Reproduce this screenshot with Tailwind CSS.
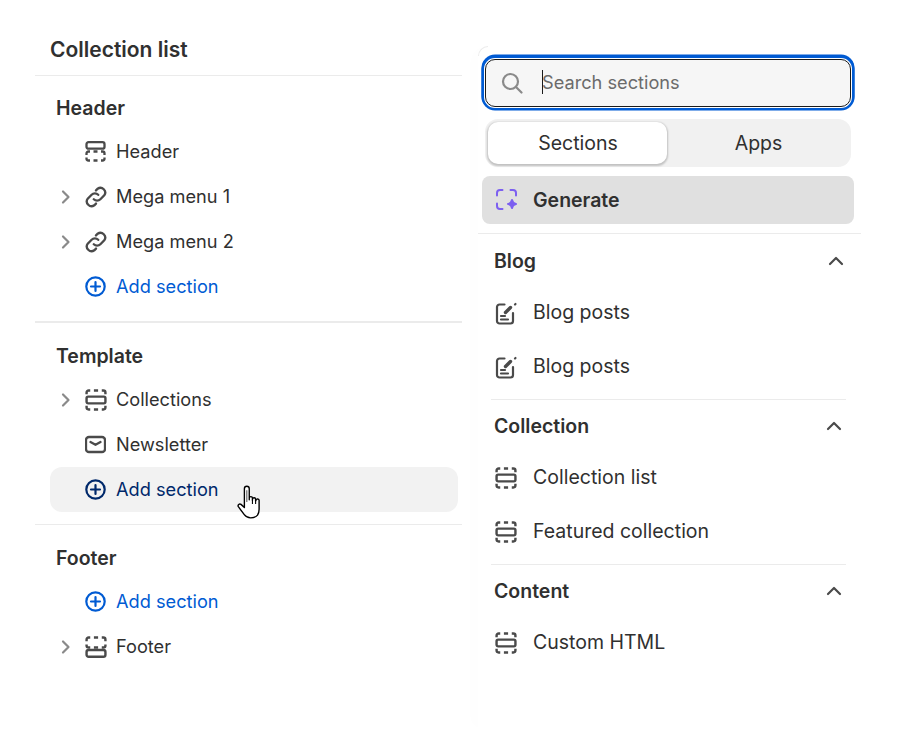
<!DOCTYPE html>
<html lang="en">
<head>
<meta charset="UTF-8">
<title>Collection list</title>
<script src="https://cdn.jsdelivr.net/npm/@tailwindcss/browser@4"></script>
</head>
<body class="bg-white font-['Inter',sans-serif] text-[#303030] overflow-hidden">
<div class="flex h-[729px] w-[922px] overflow-hidden">

  <!-- Left: section tree -->
  <div class="w-[427px] ml-[35px] shrink-0">
    <div class="h-[76px] pt-[36px] pl-[15px] border-b border-[#ebebeb] text-[21px] leading-[27px] font-semibold">Collection list</div>

    <div class="h-[247px] border-b-2 border-[#ebebeb] pt-[19px]">
      <div class="pl-[21px] h-[26px] leading-[26px] text-[19.5px] font-semibold">Header</div>
      <div class="flex items-center h-[45px] pl-[50px] gap-[10px] text-[18.2px] mt-[8px]">
        <svg class="w-[21px] h-[21px]" viewBox="0 0 21 21" fill="none" stroke="#4a4a4a" stroke-width="2.300"><rect x="1.500" y="1.200" width="18" height="6.500" rx="2"/><path d="M1.500 14v-1.500a2 2 0 0 1 2-2H5M8.500 10.500h4M16 10.500h1.500a2 2 0 0 1 2 2V14M1.500 16.500v1a2 2 0 0 0 2 2H5M8.500 19.500h4M16 19.500h1.500a2 2 0 0 0 2-2v-1"/></svg>
        <span>Header</span>
      </div>
      <div class="flex items-center h-[45px] pl-[24px] text-[18.2px]">
        <svg class="w-[14px] h-[16px] mr-[12px]" viewBox="0 0 14 16" fill="none" stroke="#8a8a8a" stroke-width="2.200" stroke-linecap="round" stroke-linejoin="round"><path d="M4 2.500 9.500 8 4 13.500"/></svg>
        <svg class="w-[22px] h-[22px] mr-[9px]" viewBox="1 1 20 20" fill="none" stroke="#4a4a4a" stroke-width="2.100" stroke-linecap="round"><path d="M9 13a4.200 4.200 0 0 0 6 0l3.500-3.500a4.300 4.300 0 0 0-6-6L11 5"/><path d="M13 9a4.200 4.200 0 0 0-6 0l-3.500 3.500a4.300 4.300 0 0 0 6 6L11 17"/></svg>
        <span>Mega menu 1</span>
      </div>
      <div class="flex items-center h-[45px] pl-[24px] text-[18.2px]">
        <svg class="w-[14px] h-[16px] mr-[12px]" viewBox="0 0 14 16" fill="none" stroke="#8a8a8a" stroke-width="2.200" stroke-linecap="round" stroke-linejoin="round"><path d="M4 2.500 9.500 8 4 13.500"/></svg>
        <svg class="w-[22px] h-[22px] mr-[9px]" viewBox="1 1 20 20" fill="none" stroke="#4a4a4a" stroke-width="2.100" stroke-linecap="round"><path d="M9 13a4.200 4.200 0 0 0 6 0l3.500-3.500a4.300 4.300 0 0 0-6-6L11 5"/><path d="M13 9a4.200 4.200 0 0 0-6 0l-3.500 3.500a4.300 4.300 0 0 0 6 6L11 17"/></svg>
        <span>Mega menu 2</span>
      </div>
      <div class="flex items-center h-[45px] pl-[50px] gap-[10px] text-[18.2px] text-[#005bd3]">
        <svg class="w-[21px] h-[21px]" viewBox="0 0 21 21" fill="none" stroke="#005bd3" stroke-width="2.200" stroke-linecap="round"><circle cx="10.500" cy="10.500" r="9.200"/><path d="M10.500 6v9M6 10.500h9"/></svg>
        <span>Add section</span>
      </div>
    </div>

    <div class="h-[202px] border-b border-[#ebebeb] pt-[20px]">
      <div class="pl-[21px] h-[26px] leading-[26px] text-[19.5px] font-semibold">Template</div>
      <div class="flex items-center h-[45px] pl-[24px] text-[18.2px] mt-[8px]">
        <svg class="w-[14px] h-[16px] mr-[12px]" viewBox="0 0 14 16" fill="none" stroke="#8a8a8a" stroke-width="2.200" stroke-linecap="round" stroke-linejoin="round"><path d="M4 2.500 9.500 8 4 13.500"/></svg>
        <svg class="w-[22px] h-[22px] mr-[9px]" viewBox="0 0 21 21" fill="none" stroke="#4a4a4a" stroke-width="2.300"><rect x="1.500" y="7.300" width="18" height="6.400" rx="1.500"/><path d="M1.500 5V3.500a2 2 0 0 1 2-2H5M8.500 1.500h4M16 1.500h1.500a2 2 0 0 1 2 2V5M1.500 16v1.500a2 2 0 0 0 2 2H5M8.500 19.500h4M16 19.500h1.500a2 2 0 0 0 2-2V16"/></svg>
        <span>Collections</span>
      </div>
      <div class="flex items-center h-[45px] pl-[50px] gap-[10px] text-[18.2px]">
        <svg class="w-[21px] h-[21px]" viewBox="0 0 21 21" fill="none" stroke="#4a4a4a" stroke-width="2.300" stroke-linecap="round" stroke-linejoin="round"><rect x="1" y="3" width="19" height="15" rx="3"/><path d="M5.500 8l5 2.800 5-2.800"/></svg>
        <span>Newsletter</span>
      </div>
      <div class="relative flex items-center h-[45px] ml-[15px] mr-[4px] pl-[35px] gap-[10px] text-[18.2px] text-[#00296b] bg-[#f2f2f2] rounded-[12px]">
        <svg class="w-[21px] h-[21px]" viewBox="0 0 21 21" fill="none" stroke="#00296b" stroke-width="2.200" stroke-linecap="round"><circle cx="10.500" cy="10.500" r="9.200"/><path d="M10.500 6v9M6 10.500h9"/></svg>
        <span>Add section</span>
        <!-- pointer cursor -->
        <svg class="absolute left-[186px] top-[18px] w-[28px] h-[36px]" viewBox="0 0 26 34" fill="#fff" stroke="#000" stroke-width="1.300" stroke-linejoin="round"><path d="M7.700 3.500a2.300 2.300 0 0 1 4.600 0v10.500l0-1.500a1.500 1.500 0 0 1 3 0v2l0-1a1.500 1.500 0 0 1 3 0v1.500l.3-.5a1.500 1.500 0 0 1 3 .5v8c0 2.500-.5 4-1.500 5.500-1.500 1.800-3.500 2.500-6.500 2.500-3 0-4.500-1-6-3L2 20.500a1.700 1.700 0 0 1 2.500-2.200l3.200 3z"/><path d="M10 5v11" stroke-width="1" stroke="#555"/><path d="M15.300 14v4M18.300 14.500v3.500" stroke-width="1"/></svg>
      </div>
    </div>

    <div class="pt-[20px]">
      <div class="pl-[21px] h-[26px] leading-[26px] text-[19.5px] font-semibold">Footer</div>
      <div class="flex items-center h-[45px] pl-[50px] gap-[10px] text-[18.2px] text-[#005bd3] mt-[8px]">
        <svg class="w-[21px] h-[21px]" viewBox="0 0 21 21" fill="none" stroke="#005bd3" stroke-width="2.200" stroke-linecap="round"><circle cx="10.500" cy="10.500" r="9.200"/><path d="M10.500 6v9M6 10.500h9"/></svg>
        <span>Add section</span>
      </div>
      <div class="flex items-center h-[45px] pl-[24px] text-[18.2px]">
        <svg class="w-[14px] h-[16px] mr-[12px]" viewBox="0 0 14 16" fill="none" stroke="#8a8a8a" stroke-width="2.200" stroke-linecap="round" stroke-linejoin="round"><path d="M4 2.500 9.500 8 4 13.500"/></svg>
        <svg class="w-[22px] h-[22px] mr-[9px]" viewBox="0 0 21 21" fill="none" stroke="#4a4a4a" stroke-width="2.300"><rect x="1.500" y="13.300" width="18" height="6.500" rx="2"/><path d="M1.500 8v1a2 2 0 0 0 2 2H5M8.500 11h4M16 11h1.500a2 2 0 0 0 2-2V8M1.500 5V3.500a2 2 0 0 1 2-2H5M8.500 1.500h4M16 1.500h1.500a2 2 0 0 1 2 2V5"/></svg>
        <span>Footer</span>
      </div>
    </div>
  </div>

  <!-- Right: add section picker -->
  <div class="relative w-[383px] ml-[16px] mt-[46px] shrink-0 rounded-tl-[12px] shadow-[-8px_0_16px_rgba(0,0,0,0.008)]">
    <div class="absolute left-0 top-0 w-[10px] h-[10px] rounded-tl-[10px] border-t border-l border-[#ececec]"></div>

    <div class="ml-[7px] mt-[13px] w-[366px] h-[48px] flex items-center rounded-[10px] bg-[#f6f6f6] border border-[#1a1a1a] shadow-[0_0_0_1px_#fff,0_0_0_3.5px_#005bd3,0_-1px_0_3.5px_#005bd3] pl-[15px]">
      <svg class="w-[22px] h-[22px] mr-[19px]" viewBox="0 0 22 22" fill="none" stroke="#8a8a8a" stroke-width="2.200" stroke-linecap="round"><circle cx="9.500" cy="9.500" r="7.500"/><path d="M15 15l5.500 5.500"/></svg>
      <span class="relative -mt-[2px] text-[18.2px] text-[#6b6b6b] leading-[24px]"><span class="absolute left-0 top-0 w-px h-[24px] bg-[#1a1a1a]"></span>Search sections</span>
    </div>

    <div class="ml-[7px] mt-[12px] w-[366px] h-[48px] bg-[#f1f1f1] rounded-[13px] flex p-[3px] text-[19.5px]">
      <div class="w-[179px] bg-white rounded-[10px] shadow-[0_1px_2px_1px_rgba(0,0,0,0.2)] flex items-center justify-center pt-[2px] pl-[1px]">Sections</div>
      <div class="flex-1 flex items-center justify-center pt-[2px] pl-[2px]">Apps</div>
    </div>

    <div class="ml-[4px] mt-[9px] w-[372px] h-[48px] bg-[#e0e0e0] rounded-[8px] flex items-center pl-[14px] gap-[15px] text-[19.5px] font-semibold">
      <svg class="w-[22px] h-[22px]" viewBox="0 0 22 22" fill="none" stroke="#7c5ff0" stroke-width="2" stroke-linecap="round"><path d="M1 6.500V4a3 3 0 0 1 3-3h2.500M14.500 1H17a3 3 0 0 1 3 3v2.500M1 14.500V17a3 3 0 0 0 3 3h2.500"/><path d="M16 11c.4 2.600 1.400 3.600 4 4-2.600.4-3.600 1.400-4 4-.4-2.600-1.400-3.600-4-4 2.600-.4 3.600-1.400 4-4z" fill="#7c5ff0" stroke-linejoin="round"/></svg>
      <span class="pt-[2px]">Generate</span>
    </div>

    <div class="mt-[9px] border-t border-[#ebebeb]">
      <div class="flex items-center justify-between h-[54px] pl-[16px] pr-[17px] text-[19.5px] font-semibold">
        <span class="pt-[2px]">Blog</span>
        <svg class="w-[16px] h-[10px]" viewBox="0 0 16 10" fill="none" stroke="#4a4a4a" stroke-width="2.200" stroke-linecap="round" stroke-linejoin="round"><path d="M2 8l6-6 6 6"/></svg>
      </div>
      <div class="flex items-center h-[54px] pl-[17px] gap-[15px] text-[19.5px] -mt-[2px]">
        <svg class="w-[23px] h-[23px]" viewBox="0 0 23 23" fill="none" stroke="#4a4a4a" stroke-width="2.200" stroke-linecap="round"><path d="M9.500 2.500H4.500A2.500 2.500 0 0 0 2 5v14a2.500 2.500 0 0 0 2.500 2.500h11a2.500 2.500 0 0 0 2.500-2.500v-8"/><path d="M10.500 10.500l5-5" stroke-width="3.400"/><path d="M20 2.500l.5-.5"/><path d="M6 14h4M6 17.500h7"/></svg>
        <span>Blog posts</span>
      </div>
      <div class="flex items-center h-[54px] pl-[17px] gap-[15px] text-[19.5px]">
        <svg class="w-[23px] h-[23px]" viewBox="0 0 23 23" fill="none" stroke="#4a4a4a" stroke-width="2.200" stroke-linecap="round"><path d="M9.500 2.500H4.500A2.500 2.500 0 0 0 2 5v14a2.500 2.500 0 0 0 2.500 2.500h11a2.500 2.500 0 0 0 2.500-2.500v-8"/><path d="M10.500 10.500l5-5" stroke-width="3.400"/><path d="M20 2.500l.5-.5"/><path d="M6 14h4M6 17.500h7"/></svg>
        <span>Blog posts</span>
      </div>
    </div>

    <div class="ml-[13px] mr-[15px] mt-[5px] border-t border-[#ebebeb]">
      <div class="flex items-center justify-between h-[52px] pl-[3px] pr-[4px] text-[19.5px] font-semibold">
        <span class="pt-[2px]">Collection</span>
        <svg class="w-[16px] h-[10px]" viewBox="0 0 16 10" fill="none" stroke="#4a4a4a" stroke-width="2.200" stroke-linecap="round" stroke-linejoin="round"><path d="M2 8l6-6 6 6"/></svg>
      </div>
      <div class="flex items-center h-[54px] pl-[4px] gap-[16px] text-[19.5px] -mt-[1px]">
        <svg class="w-[22px] h-[22px]" viewBox="0 0 21 21" fill="none" stroke="#4a4a4a" stroke-width="2.300"><rect x="1.500" y="7.300" width="18" height="6.400" rx="1.500"/><path d="M1.500 5V3.500a2 2 0 0 1 2-2H5M8.500 1.500h4M16 1.500h1.500a2 2 0 0 1 2 2V5M1.500 16v1.500a2 2 0 0 0 2 2H5M8.500 19.500h4M16 19.500h1.500a2 2 0 0 0 2-2V16"/></svg>
        <span>Collection list</span>
      </div>
      <div class="flex items-center h-[54px] pl-[4px] gap-[16px] text-[19.5px]">
        <svg class="w-[22px] h-[22px]" viewBox="0 0 21 21" fill="none" stroke="#4a4a4a" stroke-width="2.300"><rect x="1.500" y="7.300" width="18" height="6.400" rx="1.500"/><path d="M1.500 5V3.500a2 2 0 0 1 2-2H5M8.500 1.500h4M16 1.500h1.500a2 2 0 0 1 2 2V5M1.500 16v1.500a2 2 0 0 0 2 2H5M8.500 19.500h4M16 19.500h1.500a2 2 0 0 0 2-2V16"/></svg>
        <span>Featured collection</span>
      </div>
    </div>

    <div class="ml-[13px] mr-[15px] mt-[5px] border-t border-[#ebebeb]">
      <div class="flex items-center justify-between h-[52px] pl-[3px] pr-[4px] text-[19.5px] font-semibold">
        <span class="pt-[2px]">Content</span>
        <svg class="w-[16px] h-[10px]" viewBox="0 0 16 10" fill="none" stroke="#4a4a4a" stroke-width="2.200" stroke-linecap="round" stroke-linejoin="round"><path d="M2 8l6-6 6 6"/></svg>
      </div>
      <div class="flex items-center h-[54px] pl-[4px] gap-[16px] text-[19.5px] -mt-[1px]">
        <svg class="w-[22px] h-[22px]" viewBox="0 0 21 21" fill="none" stroke="#4a4a4a" stroke-width="2.300"><rect x="1.500" y="7.300" width="18" height="6.400" rx="1.500"/><path d="M1.500 5V3.500a2 2 0 0 1 2-2H5M8.500 1.500h4M16 1.500h1.500a2 2 0 0 1 2 2V5M1.500 16v1.500a2 2 0 0 0 2 2H5M8.500 19.500h4M16 19.500h1.500a2 2 0 0 0 2-2V16"/></svg>
        <span>Custom HTML</span>
      </div>
    </div>
  </div>
</div>
</body>
</html>
